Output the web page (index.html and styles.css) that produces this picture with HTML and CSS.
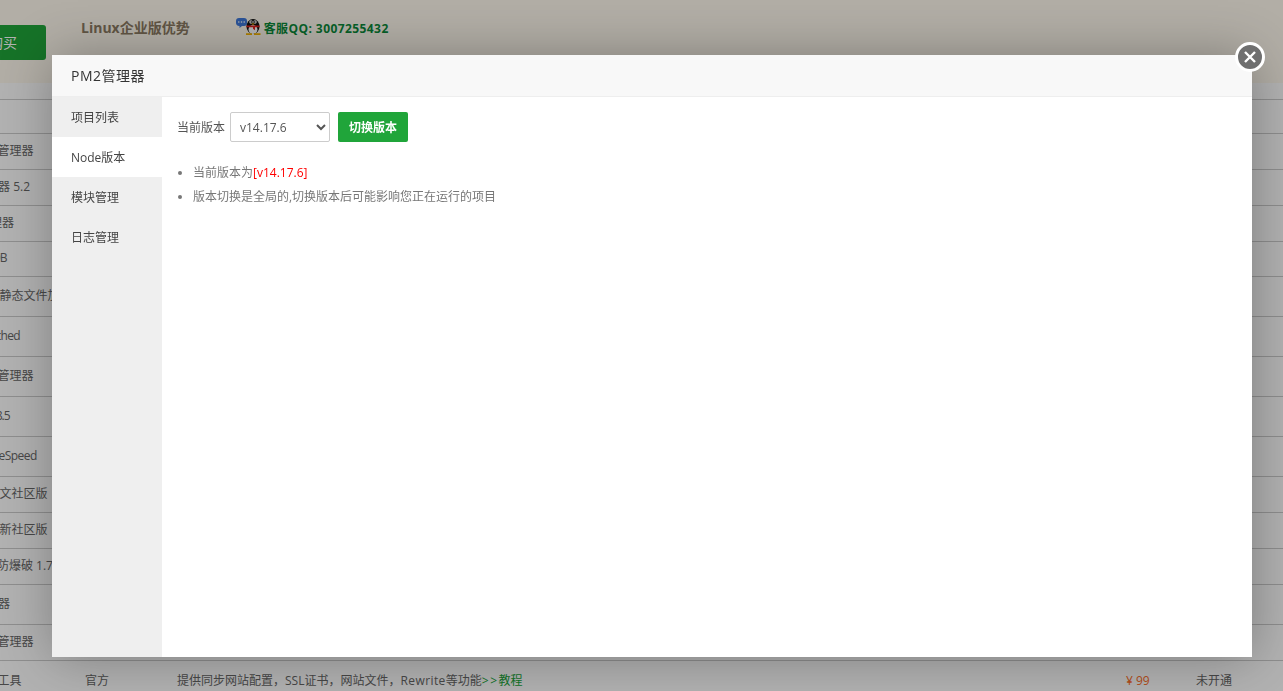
FILE: index.html
```html
<!DOCTYPE html>
<html lang="zh-CN">
<head>
<meta charset="utf-8">
<title>PM2管理器</title>
<link rel="stylesheet" href="styles.css">
</head>
<body>
<div class="page">
  <header class="top">
    <a class="buy">立即购买</a>
    <span class="adv">Linux企业版优势</span>
    <span class="qq">
      <svg class="qq-icon" width="25" height="17" viewBox="0 0 25 17" aria-hidden="true">
        <path d="M3 0h5a3 3 0 0 1 3 3v2a3 3 0 0 1-3 3H6L3.500 10V8A3 3 0 0 1 0 5V3a3 3 0 0 1 3-3z" fill="#3f78d8"/>
        <circle cx="2.800" cy="4" r=".8" fill="#fff"/><circle cx="5.500" cy="4" r=".8" fill="#fff"/><circle cx="8.200" cy="4" r=".8" fill="#fff"/>
        <ellipse cx="17" cy="8.500" rx="6.500" ry="7.500" fill="#111"/>
        <ellipse cx="17" cy="11.500" rx="4.500" ry="4.500" fill="#fff"/>
        <circle cx="15" cy="4" r="1.700" fill="#fff"/><circle cx="19" cy="4" r="1.700" fill="#fff"/>
        <circle cx="15.300" cy="4" r=".8" fill="#000"/><circle cx="18.700" cy="4" r=".8" fill="#000"/>
        <path d="M15.300 5.500h3.400l-1.700 1.500z" fill="#f5b400"/>
        <path d="M10.500 7.500h13v1.800h-4.500v3l-2-1.500v-1.500h-6.500z" fill="#e0201c"/>
        <path d="M10 15.300h6v1.700h-6zM18 15.300h6.500v1.700H18z" fill="#f5b400"/>
      </svg>
      <span class="qq-text">客服QQ: 3007255432</span>
    </span>
  </header>
  <div class="strip"></div>
  <div class="list">
    <div class="row h34"></div>
    <div class="row h36"><span class="name">Python管理器</span></div>
    <div class="row h36"><span class="name">Git管理器 5.2</span></div>
    <div class="row h36"><span class="name">FTP管理器</span></div>
    <div class="row h35"><span class="name tighter">MongoDB</span></div>
    <div class="row h40"><span class="name">Apache静态文件加速</span></div>
    <div class="row h40"><span class="name tight">Memcached</span></div>
    <div class="row h40"><span class="name">Docker管理器</span></div>
    <div class="row h40"><span class="name tighter">Tomcat 8.5</span></div>
    <div class="row h40"><span class="name snug">OpenLiteSpeed</span></div>
    <div class="row h36"><span class="name">Gitea中文社区版</span></div>
    <div class="row h36"><span class="name">Gitea最新社区版</span></div>
    <div class="row h36"><span class="name">MySQL防爆破 1.7</span></div>
    <div class="row h40"><span class="name">Git服务器</span></div>
    <div class="row h36"><span class="name">Python管理器</span></div>
    <div class="row h40 last">
      <span class="name">Python工具</span>
      <span>官方</span>
      <span>提供同步网站配置，SSL证书，网站文件，<span class="wide">Rewrite</span>等功能<a class="link"><span class="arrows">&gt;&gt;</span>教程</a></span>
      <span class="price">¥ 99</span>
      <span>未开通</span>
    </div>
  </div>
</div>

<div class="shade"></div>

<section class="dialog">
  <div class="dialog-title">PM2管理器</div>
  <div class="dialog-body">
    <nav class="side">
      <a class="side-item">项目列表</a>
      <a class="side-item active">Node版本</a>
      <a class="side-item">模块管理</a>
      <a class="side-item">日志管理</a>
    </nav>
    <div class="main">
      <div class="form-line">
        <span class="label">当前版本</span>
        <select class="version">
          <option>v14.17.6</option>
        </select>
        <button class="switch" type="button">切换版本</button>
      </div>
      <ul class="tips">
        <li>当前版本为<span class="red">[v14.17.6]</span></li>
        <li>版本切换是全局的,切换版本后可能影响您正在运行的项目</li>
      </ul>
    </div>
  </div>
  <a class="close" aria-label="关闭">
    <svg width="30" height="30" viewBox="0 0 30 30" aria-hidden="true">
      <circle cx="15" cy="15" r="13.500" fill="#6f6f6f" stroke="#fff" stroke-width="3"/>
      <path d="M10 10l10 10M20 10L10 20" stroke="#fff" stroke-width="2.400" fill="none"/>
    </svg>
  </a>
</section>
</body>
</html>
```

FILE: styles.css
```css
html, body {
  margin: 0;
  height: 691px;
  overflow: hidden;
  background: #fff;
}

body {
  font-family: "Open Sans", "Noto Sans CJK SC", sans-serif;
  font-size: 12px;
  color: #666;
}

.page {
  margin-left: -42px;
  width: 1325px;
}

.top {
  height: 83px;
  display: flex;
  align-items: flex-start;
  background: #fffaee;
}

.buy {
  margin-top: 25px;
  width: 88px;
  height: 35px;
  line-height: 36px;
  text-align: right;
  padding-right: 29px;
  box-sizing: border-box;
  white-space: nowrap;
  overflow: hidden;
  background: #20a53a;
  border-radius: 3px;
  color: #fff;
  font-size: 14px;
}

.adv {
  margin: 18px 0 0 35px;
  line-height: 20px;
  font-size: 14px;
  font-weight: 700;
  color: #8c7a64;
}

.qq {
  margin: 18px 0 0 46px;
  display: flex;
  align-items: flex-start;
}

.qq-text {
  margin: 2px 0 0 3px;
  line-height: 17px;
  font-weight: 700;
  letter-spacing: .42px;
  color: #0b8a3a;
}

.strip {
  height: 16px;
}

.row {
  display: grid;
  grid-template-columns: 127px 92px 949px 70px 1fr;
  align-items: center;
  border-top: 1px solid #ccc;
  box-sizing: border-box;
  padding-bottom: 2px;
  line-height: 20px;
  white-space: nowrap;
}

.last { padding-bottom: 0; }

.h34 { height: 34px; }
.h35 { height: 35px; }
.h36 { height: 36px; }
.h40 { height: 40px; }

.tight { letter-spacing: -.7px; }
.tighter { letter-spacing: -1px; }
.snug { letter-spacing: -.55px; }
.wide { letter-spacing: .42px; }
.arrows { letter-spacing: 1.5px; }

.link { color: #20a53a; }
.price { color: #fc6d26; }

.shade {
  position: fixed;
  inset: 0;
  background: rgba(0, 0, 0, .3);
}

.dialog {
  position: absolute;
  left: 52px;
  top: 55px;
  width: 1200px;
  height: 602px;
  display: flex;
  flex-direction: column;
  background: #fff;
  box-shadow: 1px 1px 50px rgba(0, 0, 0, .3);
}

.dialog-title {
  height: 42px;
  box-sizing: border-box;
  padding-left: 19px;
  line-height: 42px;
  font-size: 14px;
  letter-spacing: .5px;
  color: #333;
  background: #f8f8f8;
  border-bottom: 1px solid #eee;
}

.dialog-body {
  flex: 1;
  display: flex;
  min-height: 0;
}

.side {
  width: 110px;
  background: #efefef;
}

.side-item {
  display: block;
  height: 40px;
  line-height: 42px;
  padding-left: 19px;
  color: #444;
}

.active {
  background: #fff;
}

.main {
  flex: 1;
  padding: 15px 15px;
}

.form-line {
  display: flex;
  align-items: center;
}

.label {
  color: #555;
  margin-right: 5px;
}

.version {
  width: 100px;
  height: 30px;
  padding-left: 5px;
  border: 1px solid #ccc;
  border-radius: 2px;
  background: #fff;
  color: #555;
  font: inherit;
}

.switch {
  margin-left: 8px;
  width: 70px;
  height: 30px;
  padding: 0;
  border: 0;
  border-radius: 2px;
  background: #20a53a;
  color: #fff;
  font: 700 12px "Open Sans", "Noto Sans CJK SC", sans-serif;
}

.tips {
  margin: 19px 0 0;
  padding-left: 16px;
  color: #777;
  line-height: 24px;
}

.red {
  color: #f00;
}

.close {
  position: absolute;
  right: -13px;
  top: -13px;
  width: 30px;
  height: 30px;
}
```
